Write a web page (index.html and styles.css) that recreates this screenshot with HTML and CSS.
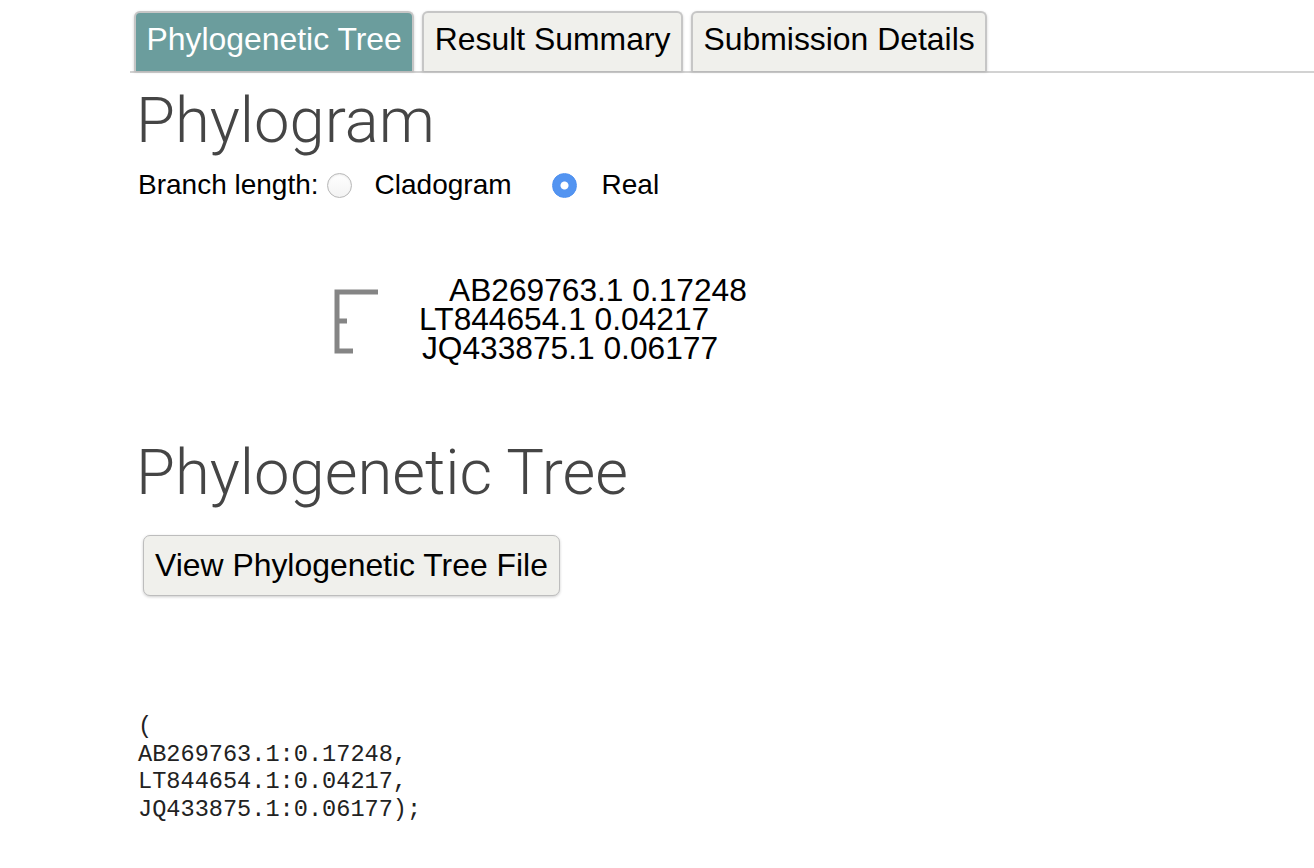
FILE: index.html
```html
<!DOCTYPE html>
<html lang="en">
<head>
<meta charset="utf-8">
<title>Phylogenetic Tree</title>
<link rel="stylesheet" href="styles.css">
</head>
<body>
<div class="page">
  <nav class="tabs">
    <div class="tab active">Phylogenetic Tree</div>
    <div class="tab">Result Summary</div>
    <div class="tab">Submission Details</div>
  </nav>
  <main class="content">
    <h2 class="heading">Phylogram</h2>
    <div class="branch-row">
      <span class="branch-label">Branch length:</span>
      <input class="radio radio-first" type="radio" name="branch" id="clado">
      <label class="opt opt-first" for="clado">Cladogram</label>
      <input class="radio radio-second" type="radio" name="branch" id="real" checked>
      <label class="opt opt-second" for="real">Real</label>
    </div>
    <svg class="tree" width="700" height="222" viewBox="0 0 700 222">
      <path class="branch" d="M240 89 H199 V148 H215 M199 118 H209"/>
      <text class="leaf" x="311" y="98">AB269763.1 0.17248</text>
      <text class="leaf" x="281" y="127">LT844654.1 0.04217</text>
      <text class="leaf" x="284" y="156">JQ433875.1 0.06177</text>
    </svg>
    <h2 class="heading">Phylogenetic Tree</h2>
    <button class="view-btn" type="button">View Phylogenetic Tree File</button>
    <pre class="newick">(
AB269763.1:0.17248,
LT844654.1:0.04217,
JQ433875.1:0.06177);</pre>
  </main>
</div>
</body>
</html>
```

FILE: styles.css
```css
html, body {
  margin: 0;
  padding: 0;
  background: #ffffff;
}

body {
  font-family: "Liberation Sans", Arial, sans-serif;
  color: #000;
}

.page {
  padding: 11px 0 0 130px;
}

.tabs {
  display: flex;
  gap: 8px;
  padding-left: 4px;
  border-bottom: 2px solid #d2d2d2;
}

.tab {
  box-sizing: border-box;
  height: 60px;
  padding: 0 10.5px 6px;
  border: 2px solid #c6c6c6;
  border-bottom: none;
  border-radius: 6px 6px 0 0;
  background: #f0f0ec;
  font-size: 31.9px;
  line-height: 52px;
  color: #000;
  white-space: nowrap;
  box-shadow: 0 1px 3px rgba(0, 0, 0, 0.18);
}

.tab.active {
  background: #6b9d9d;
  color: #ffffff;
}

.content {
  padding-left: 8px;
}

.heading {
  margin: 12px 0 0 -2px;
  font-family: Roboto, "Liberation Sans", sans-serif;
  font-weight: 300;
  font-size: 63.3px;
  line-height: 70px;
  color: #454545;
}

.branch-row {
  display: flex;
  align-items: center;
  margin-top: 12px;
  height: 36px;
  font-size: 28px;
  line-height: 36px;
}

.radio {
  appearance: none;
  -webkit-appearance: none;
  box-sizing: border-box;
  width: 25px;
  height: 25px;
  margin: 0;
  border-radius: 50%;
  border: 1px solid #b8b8b8;
  background: linear-gradient(#ffffff, #f3f3f3);
  box-shadow: inset 0 1px 2px rgba(0, 0, 0, 0.08);
}

.radio:checked {
  border-color: #4d8fef;
  background: radial-gradient(circle, #ffffff 0 3.5px, #5394f1 4.5px);
  box-shadow: none;
}

.radio-first {
  margin-left: 8px;
}

.opt-first {
  margin-left: 23px;
}

.radio-second {
  margin-left: 40px;
}

.opt-second {
  margin-left: 25px;
}

.tree {
  display: block;
}

.branch {
  fill: none;
  stroke: #858585;
  stroke-width: 5;
}

.leaf {
  font-family: "Liberation Sans", Arial, sans-serif;
  font-size: 31.7px;
  fill: #000;
}

.view-btn {
  display: block;
  margin: 28px 0 0 5px;
  padding: 11px 11px;
  border: 1.5px solid #bdbdbd;
  border-radius: 7px;
  background: #f0f0ec;
  font-family: "Liberation Sans", Arial, sans-serif;
  font-size: 31.9px;
  line-height: 37px;
  color: #000;
  box-shadow: 0 1px 3px rgba(0, 0, 0, 0.2);
}

.newick {
  margin: 117px 0 0;
  font-family: "Liberation Mono", "Courier New", monospace;
  font-size: 23.6px;
  line-height: 27.7px;
  color: #222;
}
```
